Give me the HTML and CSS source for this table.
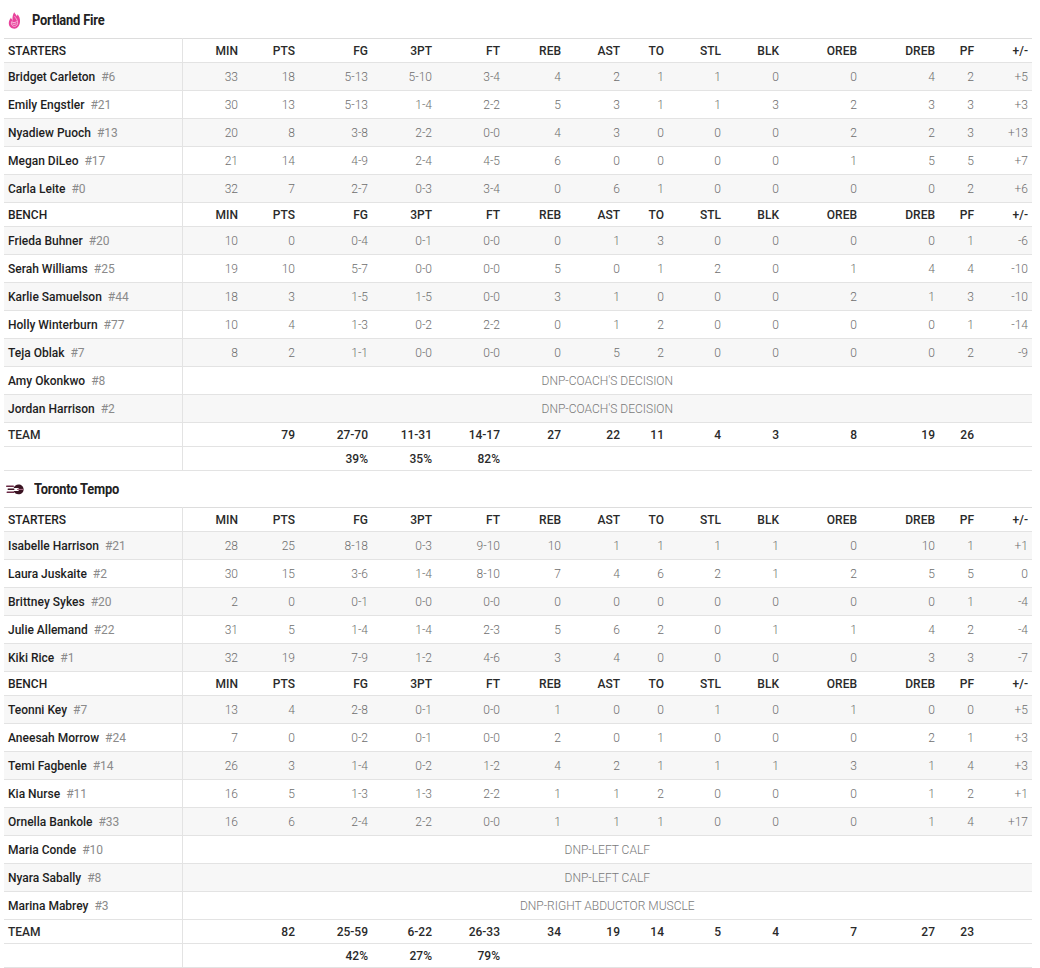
FILE: index.html
```html
<!DOCTYPE html>
<html lang="en">
<head>
<meta charset="utf-8">
<title>Box Score</title>
<link rel="stylesheet" href="styles.css">
</head>
<body>
<div class="page">

<section class="team">
  <div class="team-title">
    <svg class="logo" width="13" height="17" viewBox="0 0 13 17" aria-hidden="true">
      <path d="M6.2 0.3 C6.9 2 8.2 2.6 8.8 4.2 C9.3 3.6 9.4 2.9 9.4 2.2 C11.2 4 12.3 6.8 12 9.8 C11.7 14 9.4 16.7 6.4 16.7 C3.1 16.7 0.6 14.3 0.8 10.8 C0.9 8.6 2.2 7.1 3 5.6 C3.3 7 3.8 7.7 4.6 8 C4.2 5.3 4.8 2.6 6.2 0.3 Z" fill="#e8429b"/>
      <path d="M6.6 4.2 C7.6 6.2 9.4 7.6 9.6 10.2 C9.8 12.7 8.3 14.4 6.5 14.4 C4.6 14.4 3.2 13 3.3 11 C3.4 9.9 4 9.2 4.5 8.6" fill="none" stroke="#f7b6d8" stroke-width="0.9"/>
      <path d="M4.4 12 C5.6 12.6 7.4 12.5 8.4 11.4 M4.2 10.2 C5.4 10.8 7.2 10.7 8.6 9.6" fill="none" stroke="#ffffff" stroke-width="0.7"/>
    </svg>
    <h2 class="team-name">Portland Fire</h2>
  </div>
  <table class="box">
    <colgroup>
      <col class="c-name"><col class="c-min"><col class="c-pts"><col class="c-fg"><col class="c-3pt"><col class="c-ft"><col class="c-reb"><col class="c-ast"><col class="c-to"><col class="c-stl"><col class="c-blk"><col class="c-oreb"><col class="c-dreb"><col class="c-pf"><col class="c-pm">
    </colgroup>
    <tbody>
      <tr class="head"><th class="name">STARTERS</th><th>MIN</th><th>PTS</th><th>FG</th><th>3PT</th><th>FT</th><th>REB</th><th>AST</th><th>TO</th><th>STL</th><th>BLK</th><th>OREB</th><th>DREB</th><th>PF</th><th>+/-</th></tr>
      <tr class="alt"><td class="name">Bridget Carleton<span class="jn">#6</span></td><td>33</td><td>18</td><td>5-13</td><td>5-10</td><td>3-4</td><td>4</td><td>2</td><td>1</td><td>1</td><td>0</td><td>0</td><td>4</td><td>2</td><td>+5</td></tr>
      <tr><td class="name">Emily Engstler<span class="jn">#21</span></td><td>30</td><td>13</td><td>5-13</td><td>1-4</td><td>2-2</td><td>5</td><td>3</td><td>1</td><td>1</td><td>3</td><td>2</td><td>3</td><td>3</td><td>+3</td></tr>
      <tr class="alt"><td class="name">Nyadiew Puoch<span class="jn">#13</span></td><td>20</td><td>8</td><td>3-8</td><td>2-2</td><td>0-0</td><td>4</td><td>3</td><td>0</td><td>0</td><td>0</td><td>2</td><td>2</td><td>3</td><td>+13</td></tr>
      <tr><td class="name">Megan DiLeo<span class="jn">#17</span></td><td>21</td><td>14</td><td>4-9</td><td>2-4</td><td>4-5</td><td>6</td><td>0</td><td>0</td><td>0</td><td>0</td><td>1</td><td>5</td><td>5</td><td>+7</td></tr>
      <tr class="alt"><td class="name">Carla Leite<span class="jn">#0</span></td><td>32</td><td>7</td><td>2-7</td><td>0-3</td><td>3-4</td><td>0</td><td>6</td><td>1</td><td>0</td><td>0</td><td>0</td><td>0</td><td>2</td><td>+6</td></tr>
      <tr class="head"><th class="name">BENCH</th><th>MIN</th><th>PTS</th><th>FG</th><th>3PT</th><th>FT</th><th>REB</th><th>AST</th><th>TO</th><th>STL</th><th>BLK</th><th>OREB</th><th>DREB</th><th>PF</th><th>+/-</th></tr>
      <tr class="alt"><td class="name">Frieda Buhner<span class="jn">#20</span></td><td>10</td><td>0</td><td>0-4</td><td>0-1</td><td>0-0</td><td>0</td><td>1</td><td>3</td><td>0</td><td>0</td><td>0</td><td>0</td><td>1</td><td>-6</td></tr>
      <tr><td class="name">Serah Williams<span class="jn">#25</span></td><td>19</td><td>10</td><td>5-7</td><td>0-0</td><td>0-0</td><td>5</td><td>0</td><td>1</td><td>2</td><td>0</td><td>1</td><td>4</td><td>4</td><td>-10</td></tr>
      <tr class="alt"><td class="name">Karlie Samuelson<span class="jn">#44</span></td><td>18</td><td>3</td><td>1-5</td><td>1-5</td><td>0-0</td><td>3</td><td>1</td><td>0</td><td>0</td><td>0</td><td>2</td><td>1</td><td>3</td><td>-10</td></tr>
      <tr><td class="name">Holly Winterburn<span class="jn">#77</span></td><td>10</td><td>4</td><td>1-3</td><td>0-2</td><td>2-2</td><td>0</td><td>1</td><td>2</td><td>0</td><td>0</td><td>0</td><td>0</td><td>1</td><td>-14</td></tr>
      <tr class="alt"><td class="name">Teja Oblak<span class="jn">#7</span></td><td>8</td><td>2</td><td>1-1</td><td>0-0</td><td>0-0</td><td>0</td><td>5</td><td>2</td><td>0</td><td>0</td><td>0</td><td>0</td><td>2</td><td>-9</td></tr>
      <tr><td class="name">Amy Okonkwo<span class="jn">#8</span></td><td class="dnp" colspan="14">DNP-COACH'S DECISION</td></tr>
      <tr class="alt"><td class="name">Jordan Harrison<span class="jn">#2</span></td><td class="dnp" colspan="14">DNP-COACH'S DECISION</td></tr>
      <tr class="total"><td class="name">TEAM</td><td></td><td>79</td><td>27-70</td><td>11-31</td><td>14-17</td><td>27</td><td>22</td><td>11</td><td>4</td><td>3</td><td>8</td><td>19</td><td>26</td><td></td></tr>
      <tr class="total"><td class="name"></td><td></td><td></td><td>39%</td><td>35%</td><td>82%</td><td></td><td></td><td></td><td></td><td></td><td></td><td></td><td></td><td></td></tr>
    </tbody>
  </table>
</section>

<section class="team">
  <div class="team-title">
    <svg class="logo logo-wide" width="18" height="11" viewBox="0 0 18 11" aria-hidden="true">
      <rect x="0" y="1.6" width="8" height="1.4" rx="0.7" fill="#6b2a45"/>
      <rect x="1.5" y="4.6" width="7" height="1.4" rx="0.7" fill="#3d1424"/>
      <rect x="0.5" y="7.6" width="8" height="1.4" rx="0.7" fill="#6b2a45"/>
      <path d="M12.5 0.6 C15.4 0.6 17.6 2.7 17.6 5.4 C17.6 8.2 15.4 10.2 12.5 10.2 C10.3 10.2 8.4 8.9 7.6 6.9 L12.6 6.9 L12.6 4.1 L7.6 4.1 C8.4 2 10.3 0.6 12.5 0.6 Z" fill="#3a1322"/>
      <rect x="11" y="4.9" width="6" height="1.1" fill="#a86a84"/>
    </svg>
    <h2 class="team-name">Toronto Tempo</h2>
  </div>
  <table class="box">
    <colgroup>
      <col class="c-name"><col class="c-min"><col class="c-pts"><col class="c-fg"><col class="c-3pt"><col class="c-ft"><col class="c-reb"><col class="c-ast"><col class="c-to"><col class="c-stl"><col class="c-blk"><col class="c-oreb"><col class="c-dreb"><col class="c-pf"><col class="c-pm">
    </colgroup>
    <tbody>
      <tr class="head"><th class="name">STARTERS</th><th>MIN</th><th>PTS</th><th>FG</th><th>3PT</th><th>FT</th><th>REB</th><th>AST</th><th>TO</th><th>STL</th><th>BLK</th><th>OREB</th><th>DREB</th><th>PF</th><th>+/-</th></tr>
      <tr class="alt"><td class="name">Isabelle Harrison<span class="jn">#21</span></td><td>28</td><td>25</td><td>8-18</td><td>0-3</td><td>9-10</td><td>10</td><td>1</td><td>1</td><td>1</td><td>1</td><td>0</td><td>10</td><td>1</td><td>+1</td></tr>
      <tr><td class="name">Laura Juskaite<span class="jn">#2</span></td><td>30</td><td>15</td><td>3-6</td><td>1-4</td><td>8-10</td><td>7</td><td>4</td><td>6</td><td>2</td><td>1</td><td>2</td><td>5</td><td>5</td><td>0</td></tr>
      <tr class="alt"><td class="name">Brittney Sykes<span class="jn">#20</span></td><td>2</td><td>0</td><td>0-1</td><td>0-0</td><td>0-0</td><td>0</td><td>0</td><td>0</td><td>0</td><td>0</td><td>0</td><td>0</td><td>1</td><td>-4</td></tr>
      <tr><td class="name">Julie Allemand<span class="jn">#22</span></td><td>31</td><td>5</td><td>1-4</td><td>1-4</td><td>2-3</td><td>5</td><td>6</td><td>2</td><td>0</td><td>1</td><td>1</td><td>4</td><td>2</td><td>-4</td></tr>
      <tr class="alt"><td class="name">Kiki Rice<span class="jn">#1</span></td><td>32</td><td>19</td><td>7-9</td><td>1-2</td><td>4-6</td><td>3</td><td>4</td><td>0</td><td>0</td><td>0</td><td>0</td><td>3</td><td>3</td><td>-7</td></tr>
      <tr class="head"><th class="name">BENCH</th><th>MIN</th><th>PTS</th><th>FG</th><th>3PT</th><th>FT</th><th>REB</th><th>AST</th><th>TO</th><th>STL</th><th>BLK</th><th>OREB</th><th>DREB</th><th>PF</th><th>+/-</th></tr>
      <tr class="alt"><td class="name">Teonni Key<span class="jn">#7</span></td><td>13</td><td>4</td><td>2-8</td><td>0-1</td><td>0-0</td><td>1</td><td>0</td><td>0</td><td>1</td><td>0</td><td>1</td><td>0</td><td>0</td><td>+5</td></tr>
      <tr><td class="name">Aneesah Morrow<span class="jn">#24</span></td><td>7</td><td>0</td><td>0-2</td><td>0-1</td><td>0-0</td><td>2</td><td>0</td><td>1</td><td>0</td><td>0</td><td>0</td><td>2</td><td>1</td><td>+3</td></tr>
      <tr class="alt"><td class="name">Temi Fagbenle<span class="jn">#14</span></td><td>26</td><td>3</td><td>1-4</td><td>0-2</td><td>1-2</td><td>4</td><td>2</td><td>1</td><td>1</td><td>1</td><td>3</td><td>1</td><td>4</td><td>+3</td></tr>
      <tr><td class="name">Kia Nurse<span class="jn">#11</span></td><td>16</td><td>5</td><td>1-3</td><td>1-3</td><td>2-2</td><td>1</td><td>1</td><td>2</td><td>0</td><td>0</td><td>0</td><td>1</td><td>2</td><td>+1</td></tr>
      <tr class="alt"><td class="name">Ornella Bankole<span class="jn">#33</span></td><td>16</td><td>6</td><td>2-4</td><td>2-2</td><td>0-0</td><td>1</td><td>1</td><td>1</td><td>0</td><td>0</td><td>0</td><td>1</td><td>4</td><td>+17</td></tr>
      <tr><td class="name">Maria Conde<span class="jn">#10</span></td><td class="dnp" colspan="14">DNP-LEFT CALF</td></tr>
      <tr class="alt"><td class="name">Nyara Sabally<span class="jn">#8</span></td><td class="dnp" colspan="14">DNP-LEFT CALF</td></tr>
      <tr><td class="name">Marina Mabrey<span class="jn">#3</span></td><td class="dnp" colspan="14">DNP-RIGHT ABDUCTOR MUSCLE</td></tr>
      <tr class="total"><td class="name">TEAM</td><td></td><td>82</td><td>25-59</td><td>6-22</td><td>26-33</td><td>34</td><td>19</td><td>14</td><td>5</td><td>4</td><td>7</td><td>27</td><td>23</td><td></td></tr>
      <tr class="total"><td class="name"></td><td></td><td></td><td>42%</td><td>27%</td><td>79%</td><td></td><td></td><td></td><td></td><td></td><td></td><td></td><td></td><td></td></tr>
    </tbody>
  </table>
</section>

</div>
</body>
</html>
```
FILE: styles.css
```css
html, body {
  margin: 0;
  padding: 0;
  background: #ffffff;
}

body {
  font-family: Roboto, "Liberation Sans", Arial, sans-serif;
  color: #222222;
  font-size: 12px;
}

.page {
  padding: 2px 8px 0 4px;
}

.team-title {
  height: 36px;
  display: flex;
  align-items: center;
  padding-left: 4px;
  box-sizing: border-box;
}

.logo {
  display: block;
  margin-right: 11px;
  flex: none;
}

.logo-wide {
  margin-left: -2px;
  margin-right: 10px;
}

.team-name {
  margin: 0;
  font-family: Roboto, "Liberation Sans", sans-serif;
  font-weight: 700;
  font-size: 14px;
  color: #222222;
  letter-spacing: -0.2px;
  transform: scaleX(0.92);
  transform-origin: left center;
}

.box {
  width: 1028px;
  table-layout: fixed;
  border-collapse: collapse;
  border-top: 1px solid #dddddd;
}

.c-name { width: 178px; }
.c-min { width: 60px; }
.c-pts { width: 57px; }
.c-fg { width: 73px; }
.c-3pt { width: 64px; }
.c-ft { width: 68px; }
.c-reb { width: 61px; }
.c-ast { width: 59px; }
.c-to { width: 44px; }
.c-stl { width: 57px; }
.c-blk { width: 58px; }
.c-oreb { width: 78px; }
.c-dreb { width: 78px; }
.c-pf { width: 39px; }
.c-pm { width: 54px; }

.box th,
.box td {
  padding: 0 4px;
  text-align: right;
  white-space: nowrap;
  border-bottom: 1px solid #e3e3e3;
  font-size: 12px;
  line-height: 14px;
}

.box td {
  height: 27px;
  font-weight: 300;
  color: #6e6e6e;
}

.box th {
  height: 23px;
  font-weight: 500;
  color: #2a2a2a;
}

.box .name {
  text-align: left;
  border-right: 1px solid #e3e3e3;
  font-weight: 500;
  color: #1e1e1e;
}

.jn {
  margin-left: 6px;
  font-weight: 400;
  color: #8a8a8a;
}

.alt td {
  background: #f7f7f7;
}

.box .dnp {
  text-align: center;
  color: #7a7a7a;
  font-weight: 300;
}

.box .total td {
  height: 23px;
  font-weight: 500;
  color: #2a2a2a;
}
```
